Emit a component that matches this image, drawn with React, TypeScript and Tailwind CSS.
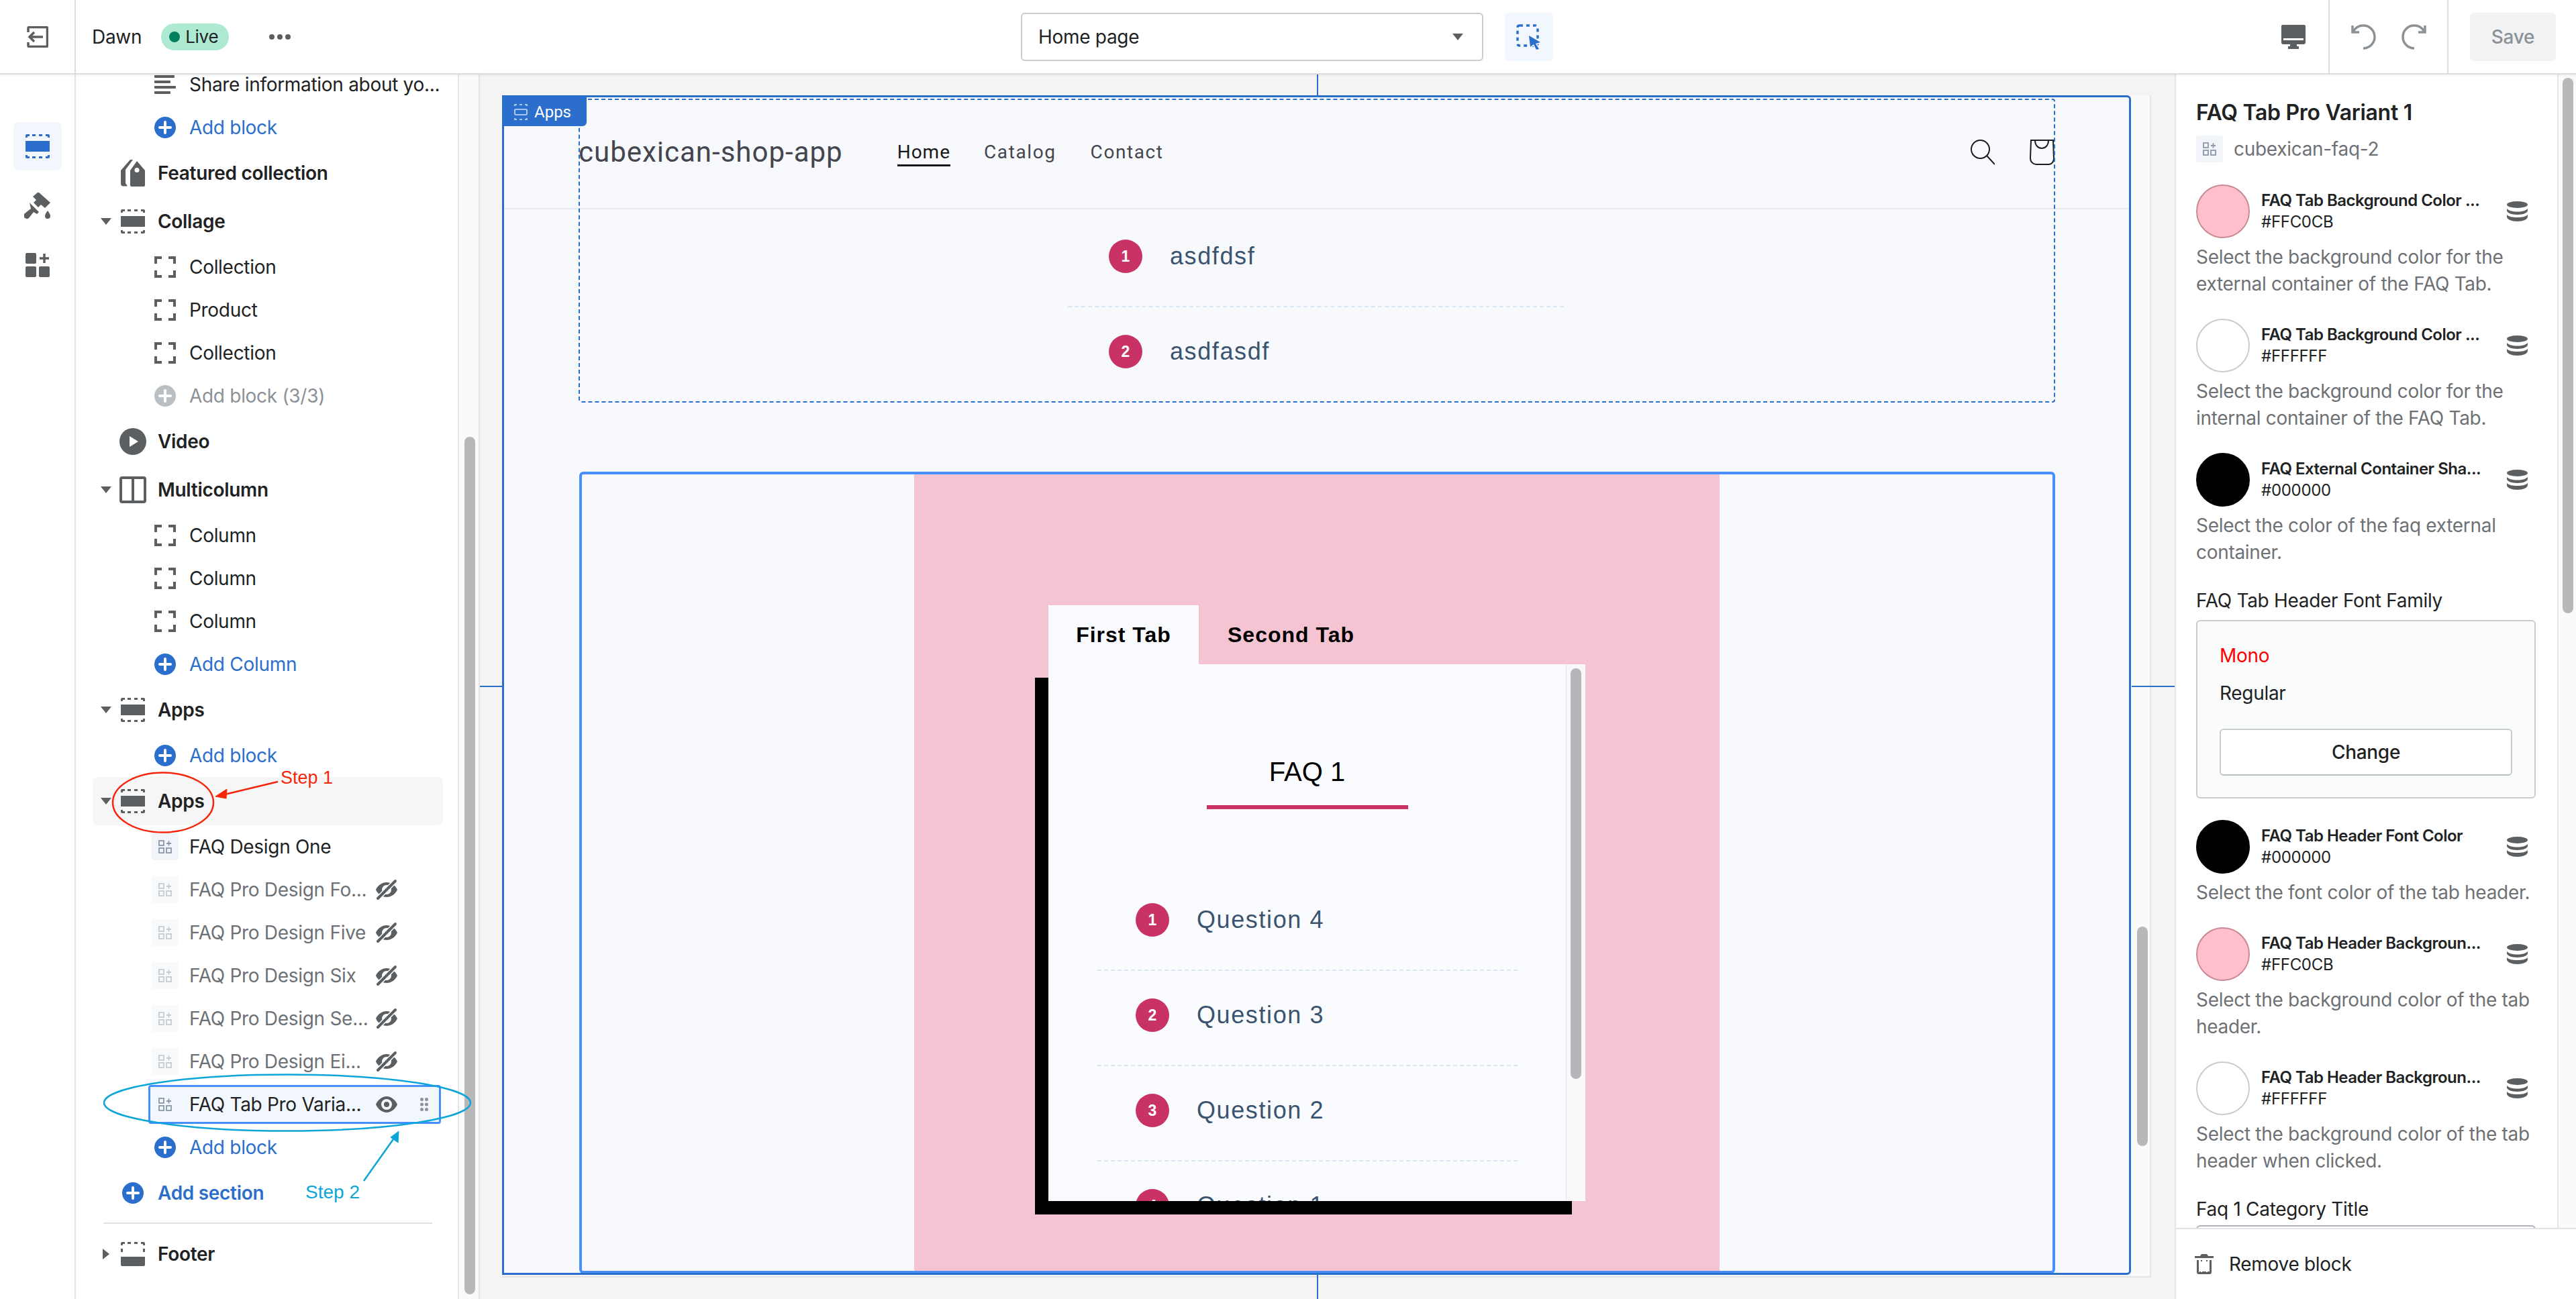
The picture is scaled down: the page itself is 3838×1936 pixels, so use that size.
import React from "react";

const G = "#5c5f62";
const BLUE = "#2c6ecb";

const SectionIcon = ({ color = G, footer = false }: { color?: string; footer?: boolean }) => (
  <svg viewBox="0 0 36 36" className="w-[36px] h-[36px] shrink-0" fill={color}>
    <path d="M0 5V2a2 2 0 0 1 2-2h4v3H3v2z" />
    <rect x="10" y="0" width="5" height="3" />
    <rect x="20" y="0" width="5" height="3" />
    <path d="M30 0h4a2 2 0 0 1 2 2v3h-3V3h-3z" />
    {footer ? (
      <>
        <rect x="0" y="10" width="3" height="5" />
        <rect x="33" y="10" width="3" height="5" />
        <path d="M0 22h36v12a2 2 0 0 1-2 2H2a2 2 0 0 1-2-2z" />
      </>
    ) : (
      <>
        <rect x="0" y="10" width="36" height="16" />
        <path d="M0 31v3a2 2 0 0 0 2 2h4v-3H3v-2z" />
        <rect x="10" y="33" width="5" height="3" />
        <rect x="20" y="33" width="5" height="3" />
        <path d="M30 36h4a2 2 0 0 0 2-2v-3h-3v2h-3z" />
      </>
    )}
  </svg>
);

const BlockIcon = () => (
  <svg viewBox="0 0 32 32" className="w-[32px] h-[32px]" fill="none" stroke={G} strokeWidth="4">
    <path d="M2 11V2h9M21 2h9v9M2 21v9h9M21 30h9v-9" />
  </svg>
);

const PlusCircle = ({ color = BLUE }: { color?: string }) => (
  <svg viewBox="0 0 32 32" className="w-[32px] h-[32px]">
    <circle cx="16" cy="16" r="16" fill={color} />
    <path d="M16 8v16M8 16h16" stroke="#fff" strokeWidth="4" strokeLinecap="round" />
  </svg>
);

const AppGlyph = ({ color, size = 20 }: { color: string; size?: number }) => (
  <svg viewBox="0 0 20 20" style={{ width: size, height: size }} fill="none" stroke={color} strokeWidth="1.8">
    <rect x="1" y="1" width="7" height="7" />
    <rect x="1" y="12" width="7" height="7" />
    <rect x="12" y="12" width="7" height="7" />
    <path d="M15.5 1.5v7M12 5h7" />
  </svg>
);

const AppBox = ({ faded = false, clear = false }: { faded?: boolean; clear?: boolean }) => (
  <div className={`w-[40px] h-[40px] shrink-0 rounded flex items-center justify-center ${clear ? "" : faded ? "bg-[#f8f9fa]" : "bg-[#f1f4f8]"}`}>
    <AppGlyph color={faded ? "#c4cbd2" : "#8a98a8"} />
  </div>
);

const Eye = () => (
  <svg viewBox="0 0 32 24" className="w-[32px] h-[24px]">
    <path fillRule="evenodd" fill={G} d="M16 0C8 0 2 7 0 12c2 5 8 12 16 12s14-7 16-12C30 7 24 0 16 0zm0 20a8 8 0 1 1 0-16 8 8 0 0 1 0 16z" />
    <circle cx="16" cy="12" r="4" fill={G} />
  </svg>
);

const EyeOff = () => (
  <svg viewBox="0 0 32 32" className="w-[32px] h-[32px]">
    <path fill={G} fillRule="evenodd" d="M16 5C8 5 2 11 0 16c2 5 8 11 16 11s14-6 16-11c-2-5-8-11-16-11zm0 18a7 7 0 1 1 0-14 7 7 0 0 1 0 14z" />
    <circle cx="16" cy="16" r="3.5" fill={G} />
    <path d="M2 30 30 2" stroke="#fff" strokeWidth="7" />
    <path d="M3 29 29 3" stroke={G} strokeWidth="4" strokeLinecap="round" />
  </svg>
);

const Grip = () => (
  <svg viewBox="0 0 12 20" className="w-[12px] h-[20px]" fill="#8c9196">
    <circle cx="2.5" cy="2.5" r="2.5" />
    <circle cx="9.5" cy="2.5" r="2.5" />
    <circle cx="2.5" cy="10" r="2.5" />
    <circle cx="9.5" cy="10" r="2.5" />
    <circle cx="2.5" cy="17.5" r="2.5" />
    <circle cx="9.5" cy="17.5" r="2.5" />
  </svg>
);

const Block = ({ icon, children, tone = "text-[#202223]" }: { icon: React.ReactNode; children: React.ReactNode; tone?: string }) => (
  <div className="h-[64px] flex items-center pl-[117px]">
    <div className="w-[32px] shrink-0 flex justify-center">{icon}</div>
    <div className={`ml-[20px] w-[278px] shrink-0 whitespace-nowrap text-[28px] ${tone}`}>{children}</div>
  </div>
);

const HiddenApp = ({ name }: { name: string }) => (
  <div className="h-[64px] flex items-center pl-[117px]">
    <div className="w-[32px] shrink-0 flex justify-center"><AppBox faded /></div>
    <div className="ml-[20px] w-[278px] shrink-0 whitespace-nowrap text-[28px] text-[#6d7175]">{name}</div>
    <EyeOff />
  </div>
);

const Section = ({ icon, name, caret, active = false }: { icon: React.ReactNode; name: string; caret?: "down" | "right"; active?: boolean }) => (
  <div className={`h-[72px] ml-[25px] w-[522px] pl-[12px] flex items-center rounded-lg ${active ? "bg-[#f6f6f7]" : ""}`}>
    <div className="w-[16px] h-[16px] shrink-0 flex items-center justify-center">
      {caret === "down" && <svg viewBox="0 0 16 10" className="w-[16px] h-[10px]"><path d="M0 0h16L8 10z" fill={G} /></svg>}
      {caret === "right" && <svg viewBox="0 0 10 16" className="w-[10px] h-[16px]"><path d="M0 0l10 8-10 8z" fill={G} /></svg>}
    </div>
    <div className="ml-[12px] w-[40px] shrink-0 flex justify-center">{icon}</div>
    <div className="ml-[17px] text-[28px] font-semibold text-[#202223] whitespace-nowrap">{name}</div>
  </div>
);

const Sidebar = () => (
  <div className="w-[602px] shrink-0 flex h-full">
    <div className="w-[571px] shrink-0 border-r-2 border-[#e4e5e7] bg-white overflow-hidden">
      <div className="h-[47px] flex items-start pl-[117px]">
        <svg viewBox="0 0 32 28" className="w-[32px] h-[28px] shrink-0 mt-[1px]" fill={G}>
          <rect x="0" y="0" width="30" height="4" rx="1" />
          <rect x="0" y="8" width="24" height="4" rx="1" />
          <rect x="0" y="16" width="32" height="4" rx="1" />
          <rect x="0" y="24" width="24" height="4" rx="1" />
        </svg>
        <div className="ml-[20px] whitespace-nowrap text-[28px] leading-[30px] text-[#202223]">Share information about yo...</div>
      </div>
      <Block icon={<PlusCircle />} tone="text-[#2c6ecb]">Add block</Block>
      <Section name="Featured collection" icon={
        <svg viewBox="0 0 36 40" className="w-[36px] h-[40px]" fill={G}>
          <path fillRule="evenodd" d="M24 2 36 16v22a2 2 0 0 1-2 2H16a2 2 0 0 1-2-2V16zm0 10a3.500 3.500 0 1 0 0 7 3.500 3.500 0 0 0 0-7z" />
          <path d="M14 0h4L7 15v20l3 4.500H4a4 4 0 0 1-4-4V16z" />
        </svg>
      } />
      <Section name="Collage" caret="down" icon={<SectionIcon />} />
      <Block icon={<BlockIcon />}>Collection</Block>
      <Block icon={<BlockIcon />}>Product</Block>
      <Block icon={<BlockIcon />}>Collection</Block>
      <Block icon={<PlusCircle color="#babfc3" />} tone="text-[#8c9196]">Add block (3/3)</Block>
      <Section name="Video" icon={
        <svg viewBox="0 0 40 40" className="w-[40px] h-[40px]">
          <circle cx="20" cy="20" r="20" fill={G} />
          <path d="M15 12l13 8-13 8z" fill="#fff" />
        </svg>
      } />
      <Section name="Multicolumn" caret="down" icon={
        <svg viewBox="0 0 40 40" className="w-[40px] h-[40px]" fill="none" stroke={G} strokeWidth="4">
          <rect x="2" y="2" width="36" height="36" rx="2" />
          <path d="M20 2v36" />
        </svg>
      } />
      <Block icon={<BlockIcon />}>Column</Block>
      <Block icon={<BlockIcon />}>Column</Block>
      <Block icon={<BlockIcon />}>Column</Block>
      <Block icon={<PlusCircle />} tone="text-[#2c6ecb]">Add Column</Block>
      <Section name="Apps" caret="down" icon={<SectionIcon />} />
      <Block icon={<PlusCircle />} tone="text-[#2c6ecb]">Add block</Block>
      <Section name="Apps" caret="down" active icon={<SectionIcon />} />
      <Block icon={<AppBox />}>FAQ Design One</Block>
      <HiddenApp name="FAQ Pro Design Fo..." />
      <HiddenApp name="FAQ Pro Design Five" />
      <HiddenApp name="FAQ Pro Design Six" />
      <HiddenApp name="FAQ Pro Design Se..." />
      <HiddenApp name="FAQ Pro Design Ei..." />
      <div className="h-[64px] flex items-center pl-[108px]">
        <div className="h-[58px] w-[436px] shrink-0 border-[3px] border-[#458fff] rounded bg-[#f2f7fe] flex items-center pl-[2px]">
          <AppBox clear />
          <div className="ml-[16px] w-[278px] shrink-0 whitespace-nowrap text-[28px] text-[#202223]">FAQ Tab Pro Varia...</div>
          <Eye />
          <div className="ml-[34px]"><Grip /></div>
        </div>
      </div>
      <Block icon={<PlusCircle />} tone="text-[#2c6ecb]">Add block</Block>
      <div className="h-[72px] pl-[69px] flex items-center">
        <PlusCircle />
        <div className="ml-[21px] text-[28px] font-semibold text-[#2c6ecb]">Add section</div>
      </div>
      <div className="mt-[8px] ml-[41px] w-[490px] h-[2px] bg-[#e1e3e5]" />
      <div className="mt-[9px]">
        <Section name="Footer" caret="right" icon={<SectionIcon footer />} />
      </div>
    </div>
    <div className="flex-1 bg-[#fafafa] border-r-2 border-[#e4e5e7] pl-[8px]">
      <div className="mt-[540px] w-[16px] h-[1278px] rounded-lg bg-[#b8b8b8]" />
    </div>
  </div>
);

const Row = ({ n, q, pad, last = false }: { n: number; q: string; pad: string; last?: boolean }) => (
  <div className={`h-[142px] flex items-start pt-[41px] ${pad} ${last ? "" : "border-b-2 border-dashed border-[#d9e6f4]"}`}>
    <div className="w-[50px] h-[50px] rounded-full bg-[#c83264] text-white font-bold text-[23px] flex items-center justify-center shrink-0">{n}</div>
    <div className="ml-[41px] h-[50px] flex items-center text-[36px] tracking-[1.6px] text-[#3a5470]">{q}</div>
  </div>
);

const Preview = () => (
  <div className="w-[2457px] h-[1762px] flex shrink-0 border-b-2 border-[#e4e5e7]">
    <div className="relative w-[2427px] h-[1758px] border-[3px] border-[#2c6ecb] rounded-tr-md rounded-br-md bg-[#f7f9fd] overflow-hidden tracking-normal font-['Liberation_Sans',Arial,sans-serif]">
      <div className="h-[167px] border-b-2 border-[#e9ebf0] pl-[111px] pr-[111px] flex items-center pb-[2px] font-['Roboto',sans-serif]">
        <div className="text-[42px] tracking-[1px] text-[#45464d] whitespace-nowrap">cubexican-shop-app</div>
        <div className="ml-[81px] text-[28px] tracking-[1px] text-[#18181b] border-b-[3px] border-[#18181b] leading-[36px] mt-[4px]">Home</div>
        <div className="ml-[50px] text-[28px] tracking-[1.6px] text-[#45464d]">Catalog</div>
        <div className="ml-[51px] text-[28px] tracking-[1.6px] text-[#45464d]">Contact</div>
        <svg viewBox="0 0 36 38" className="ml-auto w-[36px] h-[38px]" fill="none" stroke="#1c1c1e" strokeWidth="2">
          <circle cx="14.500" cy="14.500" r="13.500" />
          <path d="M24.500 24.500 36 37" />
        </svg>
        <svg viewBox="0 0 38 38" className="ml-[52px] w-[38px] h-[38px] -mr-[1px]" fill="none" stroke="#1c1c1e" strokeWidth="2">
          <path d="M2 1h33l1 27c0 5-3 9-8 9H10c-5 0-9-4-9-9z" />
          <path d="M8 1c0 16 20 16 20 0" />
        </svg>
      </div>
      <div className="pt-[4px] w-[739px] ml-[840px]">
        <Row n={1} q="asdfdsf" pad="pl-[61px]" />
        <Row n={2} q="asdfasdf" pad="pl-[61px]" last />
      </div>
      <div className="mt-[103px] ml-[112px] w-[2199px] h-[1195px] border-[4px] border-[#458fff] rounded-md overflow-hidden">
        <div className="ml-[495px] w-[1200px] h-[1200px] bg-[#f4c4d2] pl-[200px] pt-[195px]">
          <div className="h-[88px] flex">
            <div className="w-[224px] bg-[#fafbff] flex items-center justify-center text-[32px] font-bold tracking-[1px] text-black">First Tab</div>
            <div className="ml-[43px] flex items-center text-[32px] font-bold tracking-[1px] text-black">Second Tab</div>
          </div>
          <div className="w-[800px] h-[800px] flex bg-[#fafbff] shadow-[-20px_20px_0_#000]">
            <div className="w-[771px] h-full overflow-hidden">
              <div className="pt-[136px] text-center text-[40px] leading-[48px] text-black">FAQ 1</div>
              <div className="mt-[26px] mx-auto w-[300px] h-[6px] bg-[#c83264]" />
              <div className="mt-[99px] ml-[73px] w-[626px]">
                <Row n={1} q="Question 4" pad="pl-[57px]" />
                <Row n={2} q="Question 3" pad="pl-[57px]" />
                <Row n={3} q="Question 2" pad="pl-[57px]" />
                <Row n={4} q="Question 1" pad="pl-[57px]" />
              </div>
            </div>
            <div className="flex-1 border-l border-[#e6e7ea] bg-[#f9f9fb] pl-[6px] pt-[6px]">
              <div className="w-[16px] h-[612px] rounded-lg bg-[#b4b6ba]" />
            </div>
          </div>
        </div>
      </div>
      {/* dashed hover outline of the first app section */}
      <div className="absolute left-[111px] top-[2px] w-[2200px] h-[453px] border-2 border-dashed border-[#2c6ecb] rounded pointer-events-none" />
      <div className="absolute left-0 top-0 w-[123px] h-[43px] bg-[#2c6ecb] rounded-br-md flex items-center pl-[15px] gap-[10px] font-['Roboto',sans-serif]">
        <svg viewBox="0 0 20 24" className="w-[20px] h-[24px]" fill="none" stroke="#cfe0f7" strokeWidth="1.6">
          <path d="M1 3V1h3M8 1h4M16 1h3v2M1 21v2h3M8 23h4M16 23h3v-2" />
          <rect x="1" y="8" width="18" height="8" rx="1" />
        </svg>
        <span className="text-[24px] text-white">Apps</span>
      </div>
    </div>
    <div className="flex-1 bg-[#fafafa] border-r-2 border-[#e4e5e7] pl-[9px]">
      <div className="mt-[1239px] w-[16px] h-[327px] rounded-lg bg-[#b8b8b8]" />
    </div>
  </div>
);

const Db = () => (
  <svg viewBox="0 0 31 30" className="w-[31px] h-[30px] shrink-0 ml-auto" fill={G}>
    <ellipse cx="15.500" cy="5" rx="15.500" ry="5" />
    <path d="M0 11c3 3 8 4.500 15.500 4.500S28 14 31 11v3c0 3-7 6-15.500 6S0 17 0 14z" />
    <path d="M0 20c3 3 8 4 15.500 4S28 23 31 20v3c0 4-7 7-15.500 7S0 27 0 23z" />
  </svg>
);

const ColorField = ({ color, title, hex, desc, ring }: { color: string; title: string; hex: string; desc: React.ReactNode; ring: string }) => (
  <div className="mt-[32px]">
    <div className="flex items-center h-[80px] pr-[12px]">
      <div className={`w-[80px] h-[80px] rounded-full border-2 shrink-0 ${ring}`} style={{ backgroundColor: color }} />
      <div className="ml-[17px]">
        <div className="text-[24px] leading-[32px] font-semibold tracking-[-0.5px] text-[#202223] whitespace-nowrap">{title}</div>
        <div className="text-[24px] leading-[32px] text-[#202223]">{hex}</div>
      </div>
      <Db />
    </div>
    <div className="mt-[8px] text-[28px] leading-[40px] text-[#6d7175] whitespace-nowrap">{desc}</div>
  </div>
);

const RightPanel = () => (
  <div className="w-[598px] shrink-0 h-full flex flex-col bg-white border-l-2 border-[#e4e5e7]">
    <div className="flex-1 min-h-0 flex">
      <div className="w-[570px] shrink-0 h-full border-r-2 border-[#e4e5e7] pl-[30px] pr-[32px] overflow-hidden">
        <div className="pt-[37px] text-[32px] leading-[40px] font-semibold text-[#202223]">FAQ Tab Pro Variant 1</div>
        <div className="mt-[13px] flex items-center">
          <AppBox />
          <div className="ml-[16px] text-[28px] text-[#6d7175]">cubexican-faq-2</div>
        </div>
        <ColorField color="#FFC0CB" ring="border-[#c98a96]" title="FAQ Tab Background Color ..." hex="#FFC0CB" desc={<>Select the background color for the<br />external container of the FAQ Tab.</>} />
        <ColorField color="#FFFFFF" ring="border-[#c9cccf]" title="FAQ Tab Background Color ..." hex="#FFFFFF" desc={<>Select the background color for the<br />internal container of the FAQ Tab.</>} />
        <ColorField color="#000000" ring="border-black" title="FAQ External Container Sha..." hex="#000000" desc={<>Select the color of the faq external<br />container.</>} />
        <div className="mt-[32px] text-[28px] leading-[40px] text-[#202223]">FAQ Tab Header Font Family</div>
        <div className="mt-[9px] h-[266px] border-2 border-[#c9cccf] rounded-md bg-[#fafbfb] px-[33px] pt-[31px]">
          <div className="text-[28px] leading-[40px] text-[#ff0000]">Mono</div>
          <div className="mt-[16px] text-[28px] leading-[40px] text-[#202223]">Regular</div>
          <div className="mt-[33px] h-[70px] bg-white border-2 border-[#c9cccf] border-b-[#babfc3] rounded-md flex items-center justify-center text-[28px] font-medium text-[#202223]">Change</div>
        </div>
        <ColorField color="#000000" ring="border-black" title="FAQ Tab Header Font Color" hex="#000000" desc="Select the font color of the tab header." />
        <ColorField color="#FFC0CB" ring="border-[#c98a96]" title="FAQ Tab Header Backgroun..." hex="#FFC0CB" desc={<>Select the background color of the tab<br />header.</>} />
        <ColorField color="#FFFFFF" ring="border-[#c9cccf]" title="FAQ Tab Header Backgroun..." hex="#FFFFFF" desc={<>Select the background color of the tab<br />header when clicked.</>} />
        <div className="mt-[32px] text-[28px] leading-[40px] text-[#202223]">Faq 1 Category Title</div>
        <div className="mt-[4px] h-[72px] border-2 border-[#aeb4b9] rounded-md" />
      </div>
      <div className="flex-1 bg-[#fafafa] pl-[6px] pt-[5px]">
        <div className="w-[16px] h-[798px] rounded-lg bg-[#b8b8b8]" />
      </div>
    </div>
    <div className="h-[106px] shrink-0 border-t-2 border-[#e1e3e5] flex items-center pl-[28px]">
      <svg viewBox="0 0 28 30" className="w-[28px] h-[30px]" fill={G}>
        <path d="M10 0h8l2 3h8v3H0V3h8z" />
        <path fillRule="evenodd" d="M3 9h22v18a3 3 0 0 1-3 3H6a3 3 0 0 1-3-3zm6 2v16h2V11zm8 0v16h2V11zM6 11v16h1V11z" />
        <rect x="6" y="9" width="3" height="17" fill="#fff" />
        <rect x="11" y="9" width="6" height="17" fill="#fff" />
        <rect x="19" y="9" width="3" height="17" fill="#fff" />
      </svg>
      <div className="ml-[23px] text-[28px] text-[#202223]">Remove block</div>
    </div>
  </div>
);

const TopBar = () => (
  <div className="relative z-10 h-[111px] shrink-0 bg-white border-b-2 border-[#dcdddf] shadow-[0_1px_4px_rgba(0,0,0,0.08)] grid grid-cols-[1fr_auto_1fr]">
    <div className="flex items-center">
      <div className="w-[113px] h-full border-r-2 border-[#d9dbdd] flex items-center justify-center">
        <svg viewBox="0 0 32 32" className="w-[32px] h-[32px]" fill="none" stroke={G} strokeWidth="3.500">
          <path d="M2 9V3a1.500 1.500 0 0 1 1.500-1.500h25A1.500 1.500 0 0 1 30.500 3v26a1.500 1.500 0 0 1-1.500 1.500H3.500A1.500 1.500 0 0 1 2 29v-5" />
          <path d="M24 16H4M11 9l-7 7 7 7" />
        </svg>
      </div>
      <div className="ml-[24px] text-[28px] text-[#202223]">Dawn</div>
      <div className="ml-[29px] w-[101px] h-[40px] rounded-full bg-[#aee9d1] flex items-center pl-[12px]">
        <div className="w-[16px] h-[16px] rounded-full bg-[#007f5f]" />
        <div className="ml-[8px] text-[26px] text-[#202223]">Live</div>
      </div>
      <svg viewBox="0 0 32 8" className="ml-[60px] w-[32px] h-[8px]" fill={G}>
        <circle cx="4" cy="4" r="4" /><circle cx="16" cy="4" r="4" /><circle cx="28" cy="4" r="4" />
      </svg>
    </div>
    <div className="flex items-center mr-[3px]">
      <div className="w-[689px] h-[72px] border-2 border-[#c9cccf] rounded-md flex items-center pl-[24px] pr-[28px]">
        <span className="text-[28px] text-[#202223]">Home page</span>
        <svg viewBox="0 0 16 10" className="ml-auto w-[16px] h-[10px]"><path d="M0 0h16L8 10z" fill={G} /></svg>
      </div>
      <div className="ml-[32px] w-[72px] h-[72px] rounded-md bg-[#f2f7fe] flex items-center justify-center">
        <svg viewBox="0 0 38 38" className="w-[38px] h-[38px]">
          <rect x="2" y="2" width="30" height="30" rx="3" fill="none" stroke={BLUE} strokeWidth="3.500" strokeDasharray="5 5" />
          <path d="M19 17 36 27l-7 2 5 8-4 1-4-8-5 4z" fill="#f2f7fe" stroke="#f2f7fe" strokeWidth="3" />
          <path d="M19 17 36 27l-7 2 5 8-4 1-4-8-5 4z" fill={BLUE} />
        </svg>
      </div>
    </div>
    <div className="flex items-center justify-end pr-[30px]">
      <svg viewBox="0 0 36 36" className="w-[36px] h-[36px]" fill={G}>
        <path fillRule="evenodd" d="M2 0h32a2 2 0 0 1 2 2v24a3 3 0 0 1-3 3H3a3 3 0 0 1-3-3V2a2 2 0 0 1 2-2zm1 20v3h30v-3z" />
        <path d="M13 29h10v3h3v4H10v-4h3z" />
      </svg>
      <div className="ml-[34px] w-[2px] h-full bg-[#d5dde6]" />
      <svg viewBox="0 0 40 40" className="ml-[32px] w-[40px] h-[40px]" fill="none" stroke="#8c9196" strokeWidth="3.500">
        <path d="M2 3v10h10" />
        <path d="M3 12C7 5 12 3 18 3a17 17 0 0 1 0 34" />
      </svg>
      <svg viewBox="0 0 40 40" className="ml-[32px] w-[40px] h-[40px] -scale-x-100" fill="none" stroke="#8c9196" strokeWidth="3.500">
        <path d="M2 3v10h10" />
        <path d="M3 12C7 5 12 3 18 3a17 17 0 0 1 0 34" />
      </svg>
      <div className="ml-[31px] w-[2px] h-full bg-[#d5dde6]" />
      <div className="ml-[32px] w-[128px] h-[72px] rounded-md bg-[#f1f2f3] flex items-center justify-center text-[28px] font-medium text-[#8c9196]">Save</div>
    </div>
  </div>
);

const Rail = () => (
  <div className="w-[113px] shrink-0 h-full bg-white border-r-2 border-[#e4e5e7] flex flex-col items-center pt-[71px]">
    <div className="w-[72px] h-[72px] rounded-lg bg-[#f2f7fe] flex items-center justify-center">
      <SectionIcon color={BLUE} />
    </div>
    <svg viewBox="0 0 40 40" className="mt-[33px] w-[40px] h-[40px]" fill={G}>
      <path d="M22 0 40 16l-8 8-6-5-4 4-7-7 4-4-5-5z" transform="translate(-1 -1)" />
      <path d="M9 15 23 29l-3 3-5-3-7 9c-2 2-5 1-7-1s-1-4 1-6l9-7z" transform="translate(-1 0)" />
      <path d="M35 27c2 3 4 5 4 8a4 4 0 0 1-8 0c0-3 2-5 4-8z" />
    </svg>
    <svg viewBox="0 0 36 36" className="mt-[50px] w-[36px] h-[36px]" fill={G}>
      <rect x="0" y="0" width="16" height="16" rx="2" />
      <rect x="0" y="20" width="16" height="16" rx="2" />
      <rect x="20" y="20" width="16" height="16" rx="2" />
      <path d="M28 1v14M21 8h14" stroke={G} strokeWidth="3.500" />
    </svg>
  </div>
);

const Canvas = () => (
  <div className="relative flex-1 min-w-0 h-full bg-[#f4f4f4] pl-[33px] pt-[31px] overflow-hidden">
    <Preview />
    <div className="absolute left-[1247px] top-0 w-[2px] h-[31px] bg-[#2c6ecb]" />
    <div className="absolute left-[1247px] top-[1789px] w-[2px] h-[36px] bg-[#2c6ecb]" />
    <div className="absolute left-0 top-[911px] w-[33px] h-[2px] bg-[#2c6ecb]" />
    <div className="absolute left-[2461px] top-[911px] w-[64px] h-[2px] bg-[#2c6ecb]" />
  </div>
);

const Annotations = () => (
  <>
    <svg className="absolute left-0 top-0 w-[720px] h-[1936px] pointer-events-none z-20" viewBox="0 0 720 1936" fill="none">
      <ellipse cx="243" cy="1196" rx="75" ry="44.500" stroke="#f5260c" strokeWidth="2.500" />
      <path d="M414 1165 335 1184" stroke="#f5260c" strokeWidth="2.500" />
      <path d="M321 1187 338 1176 337 1190z" fill="#f5260c" stroke="#f5260c" />
      <ellipse cx="428" cy="1643.500" rx="273" ry="42" stroke="#0ba5d8" strokeWidth="2.500" />
      <path d="M542 1760 588 1695" stroke="#0ba5d8" strokeWidth="2.500" />
      <path d="M594 1686 593 1703 582 1695z" fill="#0ba5d8" stroke="#0ba5d8" />
    </svg>
    <div className="absolute left-[418px] top-[1143px] z-20 text-[27px] tracking-normal leading-[32px] text-[#f5260c] font-['Liberation_Sans',Arial,sans-serif]">Step 1</div>
    <div className="absolute left-[455px] top-[1761px] z-20 text-[28px] tracking-normal leading-[32px] text-[#0ba5d8] font-['Liberation_Sans',Arial,sans-serif]">Step 2</div>
  </>
);

export default function App() {
  return (
    <div className="relative w-[3838px] h-[1936px] overflow-hidden flex flex-col bg-white tracking-[-0.3px] font-['Inter',sans-serif]">
      <TopBar />
      <div className="flex-1 min-h-0 flex">
        <Rail />
        <Sidebar />
        <Canvas />
        <RightPanel />
      </div>
      <Annotations />
    </div>
  );
}
